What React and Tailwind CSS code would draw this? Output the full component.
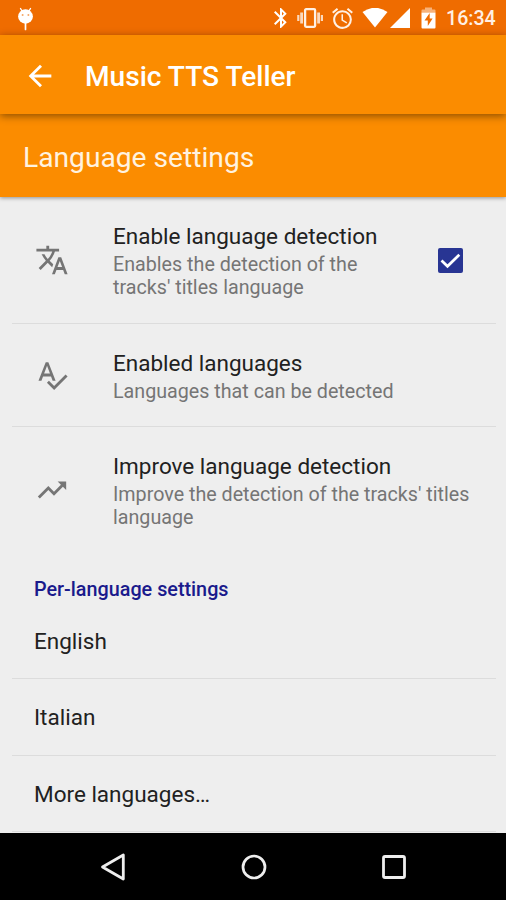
import { MdAlarm, MdArrowBack, MdBluetooth, MdSpellcheck, MdTranslate, MdTrendingUp } from 'react-icons/md';

const detectionItems = [
    {
        icon: MdTranslate,
        title: 'Enable language detection',
        lines: ['Enables the detection of the', "tracks' titles language"],
        checked: true,
        height: 'h-[127px]',
    },
    {
        icon: MdSpellcheck,
        title: 'Enabled languages',
        lines: ['Languages that can be detected'],
        height: 'h-[103px]',
    },
    {
        icon: MdTrendingUp,
        title: 'Improve language detection',
        lines: ["Improve the detection of the tracks' titles", 'language'],
        height: 'h-[126px]',
    },
];

const languages = ['English', 'Italian', 'More languages…'];

function StatusBar() {
    return (
        <div className="h-[35px] shrink-0 bg-[#ef6c00] flex items-center text-white pl-[17px] pr-[10px] pt-[2px]">
            <svg width="17" height="24" viewBox="0 0 17 24">
                <path d="M3.5 1.5 L5 4 M13.5 1.5 L12 4" stroke="white" strokeWidth="1.4" strokeLinecap="round" />
                <ellipse cx="8.5" cy="9.5" rx="7.4" ry="7.2" fill="white" />
                <circle cx="5.6" cy="8" r="1" fill="#f5a868" />
                <circle cx="11.4" cy="8" r="1" fill="#f5a868" />
                <path d="M8.5 16 V22.5" stroke="white" strokeWidth="1.7" strokeLinecap="round" />
            </svg>
            <div className="ml-auto flex items-center">
                <MdBluetooth className="w-[24px] h-[24px]" />
                <svg width="26" height="22" viewBox="0 0 26 22" fill="none" className="ml-[4px]">
                    <rect x="8.1" y="2.2" width="10" height="17.6" rx="1" stroke="#fff0e4" strokeWidth="2.3" />
                    <path d="M4.6 5.5 V16.5 M21.6 5.5 V16.5" stroke="#fbd9bd" strokeWidth="2.8" />
                    <path d="M1.3 8 V14 M24.9 8 V14" stroke="#fbd9bd" strokeWidth="2.2" />
                </svg>
                <MdAlarm className="w-[25px] h-[25px] ml-[7px] text-[#fff0e4]" />
                <svg width="26" height="20" viewBox="0 0 26 20" className="ml-[7px]">
                    <path d="M0.5 4 Q13 -4.5 25.5 4 L13 19.5 Z" fill="white" />
                </svg>
                <svg width="20" height="20" viewBox="0 0 20 20" className="ml-[2px]">
                    <path d="M20 0 V20 H0 Z" fill="white" />
                </svg>
                <svg width="15" height="22" viewBox="0 0 15 22" className="ml-[11px]">
                    <path d="M0.5 5.5 V3.6 Q0.5 2.6 1.5 2.6 H4 V0.5 H11 V2.6 H13.5 Q14.5 2.6 14.5 3.6 V5.5 Z" fill="#f7b27a" />
                    <path d="M0.5 5.5 H14.5 V20.5 Q14.5 21.5 13.5 21.5 H1.5 Q0.5 21.5 0.5 20.5 Z" fill="white" />
                    <path d="M8.7 6 L3.5 13.5 H6.8 V19 L11.6 11.5 H8.7 Z" fill="#ef6c00" />
                </svg>
                <span className="ml-[10px] w-[50px] pt-px whitespace-nowrap text-[19.6px] font-medium text-[#fff0e4]">16:34</span>
            </div>
        </div>
    );
}

function Header() {
    return (
        <>
            <header className="relative z-10 h-[79px] shrink-0 bg-[#fb8c00] flex items-center pl-[23px] pt-[2px] text-white shadow-[0_2px_8px_rgba(0,0,0,0.45)]">
                <MdArrowBack className="w-[34px] h-[34px]" />
                <h1 className="ml-[28px] pt-[3px] text-[28.1px] font-medium">Music TTS Teller</h1>
            </header>
            <div className="relative h-[83px] shrink-0 bg-[#fb8c00] flex items-center pl-[23px] pt-[5px] shadow-[0_1px_4px_rgba(0,0,0,0.4)]">
                <h2 className="text-[28.2px] text-[#fff3e0]">Language settings</h2>
            </div>
        </>
    );
}

function Checkbox() {
    return (
        <div className="w-[25px] h-[25px] rounded-[2px] bg-[#283593] flex items-center justify-center">
            <svg width="21" height="17" viewBox="0 0 21 17" fill="none">
                <path d="M1.5 8.5 L7.5 14.3 L19.3 2.7" stroke="white" strokeWidth="2.7" />
            </svg>
        </div>
    );
}

function DetectionItem({ icon: Icon, title, lines, checked, height }) {
    return (
        <li className={`${height} flex items-center pl-[23px] pr-[33px]`}>
            <Icon className="w-[34px] h-[34px] shrink-0 text-[#757575]" />
            <div className="ml-[44px] flex-1 min-w-0 pt-[2px]">
                <p className="mb-[4px] text-[22.5px] leading-[26px] text-[#212121] whitespace-nowrap">{title}</p>
                {lines.map((line) => (
                    <p key={line} className="text-[19.7px] leading-[23px] text-[#757575] whitespace-nowrap">{line}</p>
                ))}
            </div>
            {checked && <Checkbox />}
        </li>
    );
}

function NavigationBar() {
    return (
        <nav className="h-[67px] shrink-0 bg-black flex items-center justify-between pl-[100px] pr-[98px]">
            <svg width="28" height="28" viewBox="0 0 28 28" fill="none" stroke="#eeeeee" strokeWidth="2.8" strokeLinejoin="round">
                <path d="M2.5 14 L23.3 2 V26 Z" />
            </svg>
            <svg width="28" height="28" viewBox="0 0 28 28" fill="none" stroke="#eeeeee" strokeWidth="2.7">
                <circle cx="14" cy="14" r="11" />
            </svg>
            <svg width="28" height="28" viewBox="0 0 28 28" fill="none" stroke="#eeeeee" strokeWidth="2.8">
                <rect x="3.5" y="3.5" width="21" height="21" rx="1.5" />
            </svg>
        </nav>
    );
}

export default function App() {
    return (
        <div className="w-[506px] h-[900px] overflow-hidden flex flex-col bg-[#eeeeee] font-['Roboto',sans-serif]">
            <StatusBar />
            <Header />
            <main className="flex-1 min-h-0 pl-[12px] pr-[10px]">
                <ul className="divide-y divide-[#dcdcdc]">
                    {detectionItems.map((item) => (
                        <DetectionItem key={item.title} {...item} />
                    ))}
                </ul>
                <h3 className="h-[50px] pl-[22px] pt-[22px] text-[19.8px] leading-[30px] font-medium text-[#1a1a8c]">Per-language settings</h3>
                <ul>
                    {languages.map((language) => (
                        <li key={language} className="h-[76.4px] pl-[22px] pt-[2px] flex items-center border-b border-[#dcdcdc] text-[22.5px] text-[#212121]">
                            {language}
                        </li>
                    ))}
                </ul>
            </main>
            <NavigationBar />
        </div>
    );
}
